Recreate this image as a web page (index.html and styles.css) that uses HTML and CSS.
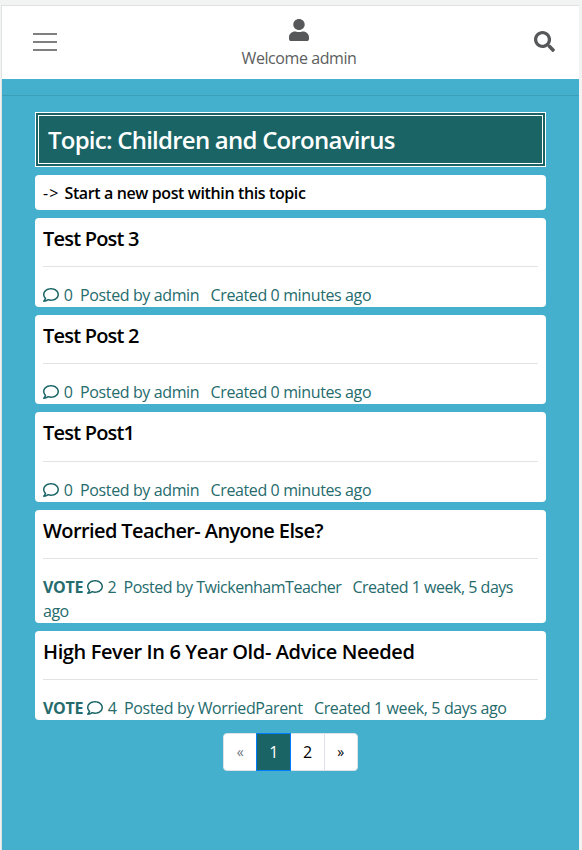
FILE: index.html
```html
<!DOCTYPE html>
<html lang="en">
<head>
<meta charset="utf-8">
<title>Topic: Children and Coronavirus</title>
<link rel="stylesheet" href="styles.css">
</head>
<body>
<svg class="defs" aria-hidden="true">
  <symbol id="comment" viewBox="0 0 512 512"><path d="M256 32C114.6 32 0 125.1 0 240c0 47.6 19.9 91.2 52.900 126.300C38 405.700 7 439.100 6.500 439.500c-6.600 7-8.400 17.200-4.600 26S14.400 480 24 480c61.500 0 110-25.700 139.100-46.300C192 442.800 223.200 448 256 448c141.400 0 256-93.100 256-208S397.400 32 256 32zm0 368c-26.700 0-53.100-4.100-78.400-12.100l-22.700-7.200-19.500 13.800c-14.300 10.100-33.900 21.400-57.500 29 7.300-12.100 14.400-25.700 19.900-40.200l10.600-28.100-20.600-21.800C69.700 314.100 48 282.200 48 240c0-88.200 93.300-160 208-160s208 71.800 208 160-93.300 160-208 160z"/></symbol>
</svg>
<div class="page">
  <header class="navbar">
    <svg class="menu" viewBox="0 0 24 18"><path d="M0 1h24M0 9h24M0 17h24"/></svg>
    <div class="user">
      <svg class="user-icon" viewBox="0 0 448 512" preserveAspectRatio="none"><path d="M224 256c70.700 0 128-57.300 128-128S294.700 0 224 0 96 57.300 96 128s57.300 128 128 128zm89.600 32h-16.700c-22.200 10.200-46.900 16-72.900 16s-50.600-5.800-72.900-16h-16.700C60.200 288 0 348.200 0 422.400V464c0 26.500 21.500 48 48 48h352c26.500 0 48-21.500 48-48v-41.600c0-74.200-60.200-134.400-134.400-134.400z"/></svg>
      <span class="welcome">Welcome admin</span>
    </div>
    <svg class="search" viewBox="0 0 512 512"><path d="M505 442.700L405.300 343c-4.500-4.500-10.600-7-17-7H372c27.600-35.300 44-79.700 44-128C416 93.100 322.900 0 208 0S0 93.100 0 208s93.100 208 208 208c48.300 0 92.700-16.400 128-44v16.300c0 6.400 2.500 12.500 7 17l99.700 99.700c9.400 9.400 24.600 9.400 33.900 0l28.300-28.300c9.400-9.400 9.400-24.600.1-34zM208 336c-70.700 0-128-57.200-128-128 0-70.700 57.200-128 128-128 70.700 0 128 57.200 128 128 0 70.700-57.200 128-128 128z"/></svg>
  </header>
  <hr class="rule">
  <main class="content">
    <h1 class="topic">Topic: Children and Coronavirus</h1>
    <a class="new-post"><span class="arrow">-&gt;</span> Start a new post within this topic</a>
    <article class="post short">
      <h2>Test Post 3</h2>
      <p><svg class="comment"><use href="#comment"/></svg> 0 &nbsp;Posted by admin &nbsp; Created 0 minutes ago</p>
    </article>
    <article class="post short">
      <h2>Test Post 2</h2>
      <p><svg class="comment"><use href="#comment"/></svg> 0 &nbsp;Posted by admin &nbsp; Created 0 minutes ago</p>
    </article>
    <article class="post short">
      <h2>Test Post1</h2>
      <p><svg class="comment"><use href="#comment"/></svg> 0 &nbsp;Posted by admin &nbsp; Created 0 minutes ago</p>
    </article>
    <article class="post tight">
      <h2>Worried Teacher- Anyone Else?</h2>
      <p><b>VOTE</b> <svg class="comment"><use href="#comment"/></svg> 2 &nbsp;Posted by TwickenhamTeacher &nbsp; Created 1 week, 5 days<br>ago</p>
    </article>
    <article class="post wide">
      <h2>High Fever In 6 Year Old- Advice Needed</h2>
      <p><b>VOTE</b> <svg class="comment"><use href="#comment"/></svg> 4 &nbsp;Posted by WorriedParent &nbsp; Created 1 week, 5 days ago</p>
    </article>
    <nav class="pages"><span class="prev">«</span><span class="active">1</span><span class="two">2</span><span class="next">»</span></nav>
  </main>
</div>
</body>
</html>
```
FILE: styles.css
```css
* { box-sizing: border-box; }
body {
  margin: 0;
  background: #f2f4f4;
  font: 400 16px/24px "Open Sans", "Noto Sans", sans-serif;
  overflow: hidden;
}
h1, h2, p { margin: 0; }
.defs { display: none; }
.page {
  margin: 5px 3px 0 1px;
  height: 845px;
  border-top: 1px solid #e0e0e0;
  border-left: 1px solid #e0e3e3;
  background: #44b0cd;
}
.navbar {
  display: flex;
  justify-content: space-between;
  height: 73px;
  padding: 0 24px 0 31px;
  background: #fff;
  color: #5c5e60;
}
.menu { width: 24px; height: 18px; margin-top: 27px; fill: none; stroke: #808080; stroke-width: 2; }
.user { display: flex; flex-direction: column; align-items: center; padding: 13px 0 0 7px; }
.user-icon { width: 20px; height: 22px; fill: #56585a; }
.welcome { margin-top: 5px; white-space: nowrap; letter-spacing: -0.42px; }
.search { width: 21px; height: 21px; margin-top: 25px; fill: #56585a; }
.rule { margin: 16px 0; border: 0; border-top: 1px solid #3d9eb8; }
.content { padding: 0 33px; }
.topic {
  height: 55px;
  padding: 0 9px;
  border: 4px double #fff;
  background: #1a6466;
  color: #fff;
  font-size: 24px;
  font-weight: 600;
  line-height: 48px;
  letter-spacing: -0.76px;
  white-space: nowrap;
}
.new-post {
  display: block;
  height: 35px;
  margin-top: 8px;
  padding: 6px 8px;
  border-radius: 4px;
  background: #fff;
  color: #000;
  font-weight: 550;
  letter-spacing: -0.38px;
}
.arrow { margin-right: 1px; font-weight: 400; letter-spacing: 1.2px; }
.post {
  margin-top: 8px;
  padding: 9px 8px 0;
  border-radius: 4px;
  background: #fff;
  color: #266b6d;
  white-space: nowrap;
}
.post h2 {
  height: 40.2px;
  margin-bottom: 16px;
  border-bottom: 1px solid #e2e4e4;
  color: #000;
  font-size: 20px;
  font-weight: 550;
  line-height: 24px;
  letter-spacing: -0.6px;
}
.post.short h2 { letter-spacing: -0.8px; }
.post.wide h2 { letter-spacing: -0.38px; }
.post p { letter-spacing: -0.38px; }
.post.tight p { letter-spacing: -0.48px; }
.post b { letter-spacing: -0.3px; }
.comment { width: 16px; height: 16px; margin-right: 1px; vertical-align: -2px; fill: #1a6466; }
.pages {
  display: flex;
  width: 135px;
  height: 38px;
  margin: 13px auto 0;
  border: 1px solid #dee2e6;
  border-radius: 4px;
  background: #fff;
  color: #000;
  line-height: 36px;
  text-align: center;
}
.pages span { flex: 1; border-left: 1px solid #dee2e6; }
.pages .prev, .pages .next { font-size: 14px; }
.pages .prev { border-left: 0; color: #6c757d; }
.pages .active { flex: 0 0 35px; margin: -1px 0; border: 1px solid #007bff; background: #1a6466; color: #fff; }
.pages .two { border-left: 0; }
```
